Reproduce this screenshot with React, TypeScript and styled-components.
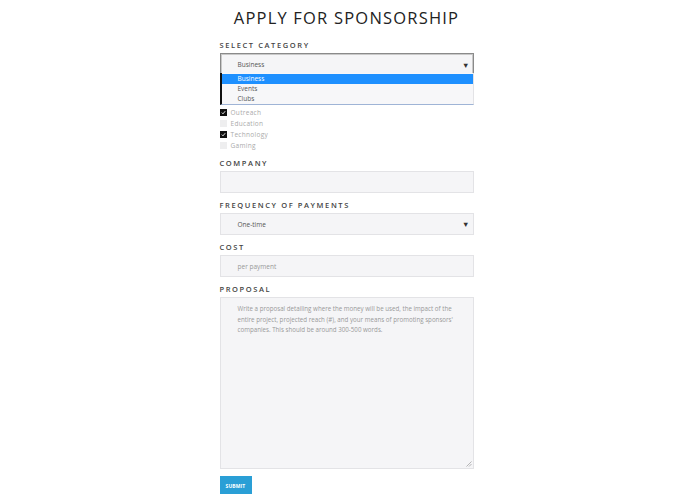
import React from "react";
import styled, { createGlobalStyle } from "styled-components";

const Global = createGlobalStyle`
  html, body { margin: 0; padding: 0; background: #fff; }
  body { font-family: "Lato", "Open Sans", sans-serif; color: #333; }
  * { box-sizing: border-box; }
`;

const Page = styled.div`
  width: 254px;
  margin: 0 auto;
  transform: translateX(-1px);
`;

const Title = styled.h1`
  margin: 8px 0 0;
  font-family: "Open Sans", sans-serif;
  font-weight: 400;
  font-size: 16.5px;
  line-height: 20px;
  letter-spacing: 1.2px;
  text-align: center;
  color: #222;
`;

const Label = styled.div<{ $top?: number }>`
  margin-top: ${(p) => p.$top ?? 7}px;
  font-family: "Open Sans", sans-serif;
  font-size: 7.5px;
  font-weight: 600;
  line-height: 10px;
  letter-spacing: 1.6px;
  color: #444;
  text-transform: uppercase;
`;

const Field = styled.div<{ $h?: number; $focus?: boolean }>`
  position: relative;
  margin-top: 3px;
  height: ${(p) => p.$h ?? 22}px;
  background: #f5f5f7;
  border: 1px solid ${(p) => (p.$focus ? "#8a8a8a" : "#e3e3e6")};
  box-shadow: ${(p) => (p.$focus ? "inset 0 0 0 1px #c9c9c9" : "none")};
  display: flex;
  align-items: center;
  padding: 0 0 0 17px;
  font-family: "Open Sans", sans-serif;
  font-size: 6.5px;
  color: #555;
`;

const Placeholder = styled.span`
  color: #999;
`;

const Arrow = styled.span`
  position: absolute;
  right: 3px;
  top: 50%;
  transform: translateY(-50%);
  font-size: 7.5px;
  color: #333;
`;

const List = styled.div`
  position: absolute;
  left: -1px;
  right: -1px;
  top: 19px;
  z-index: 2;
  background: #f7f7f9;
  border-left: 2px solid #111;
  border-right: 1px solid #e3e3e6;
  border-bottom: 1px solid #9fb4d6;
  padding-top: 1px;
`;

const Option = styled.div<{ $sel?: boolean }>`
  height: 10px;
  line-height: 10px;
  padding-left: 16px;
  font-family: "Open Sans", sans-serif;
  font-size: 6.5px;
  color: ${(p) => (p.$sel ? "#fff" : "#555")};
  background: ${(p) => (p.$sel ? "#1e90ff" : "transparent")};
`;

const Checks = styled.div`
  margin-top: 31px;
  display: flex;
  flex-direction: column;
`;

const CheckRow = styled.div`
  height: 11px;
  display: flex;
  align-items: center;
  gap: 4px;
  font-family: "Open Sans", sans-serif;
  font-size: 6.5px;
  letter-spacing: 0.3px;
  color: #aaa;
`;

const Box = styled.span<{ $on?: boolean }>`
  width: 7px;
  height: 7px;
  background: ${(p) => (p.$on ? "#111" : "#eeeeef")};
  display: flex;
  align-items: center;
  justify-content: center;
`;

const Area = styled.div`
  position: relative;
  margin-top: 3px;
  height: 172px;
  background: #f5f5f7;
  border: 1px solid #e3e3e6;
  padding: 6px 18px 0 17px;
  font-family: "Open Sans", sans-serif;
  font-size: 6.2px;
  line-height: 10.5px;
  color: #999;
`;

const Grip = styled.svg`
  position: absolute;
  right: 1px;
  bottom: 1px;
`;

const Submit = styled.button`
  margin-top: 7px;
  width: 32px;
  height: 20px;
  border: none;
  background: #2a9fd6;
  color: #fff;
  font-family: "Open Sans", sans-serif;
  font-weight: 700;
  font-size: 5px;
  letter-spacing: 0.1px;
  padding: 0;
  display: block;
`;

const Tick = () => (
  <svg width="5" height="5" viewBox="0 0 5 5">
    <path d="M0.8 2.6 L2 3.8 L4.2 1.2" stroke="#fff" strokeWidth="0.9" fill="none" />
  </svg>
);

const checks = [
  { t: "Outreach", on: true },
  { t: "Education", on: false },
  { t: "Technology", on: true },
  { t: "Gaming", on: false },
];

export default function App() {
  return (
    <>
      <Global />
      <Page>
        <Title>APPLY FOR SPONSORSHIP</Title>
        <Label $top={12}>Select Category</Label>
        <Field $h={23} $focus>
          Business
          <Arrow>▼</Arrow>
          <List>
            <Option $sel>Business</Option>
            <Option>Events</Option>
            <Option>Clubs</Option>
          </List>
        </Field>
        <Checks>
          {checks.map((c) => (
            <CheckRow key={c.t}>
              <Box $on={c.on}>{c.on && <Tick />}</Box>
              {c.t}
            </CheckRow>
          ))}
        </Checks>
        <Label $top={7}>Company</Label>
        <Field />
        <Label>Frequency of Payments</Label>
        <Field>
          One-time
          <Arrow>▼</Arrow>
        </Field>
        <Label>Cost</Label>
        <Field>
          <Placeholder>per payment</Placeholder>
        </Field>
        <Label>Proposal</Label>
        <Area>
          Write a proposal detailing where the money will be used, the impact of the entire project, projected reach (#), and your means of promoting sponsors' companies. This should be around 300-500 words.
          <Grip width="6" height="6" viewBox="0 0 6 6">
            <path d="M5.5 0.5 L0.5 5.5 M5.5 3 L3 5.5" stroke="#999" strokeWidth="0.7" />
          </Grip>
        </Area>
        <Submit>SUBMIT</Submit>
      </Page>
    </>
  );
}
